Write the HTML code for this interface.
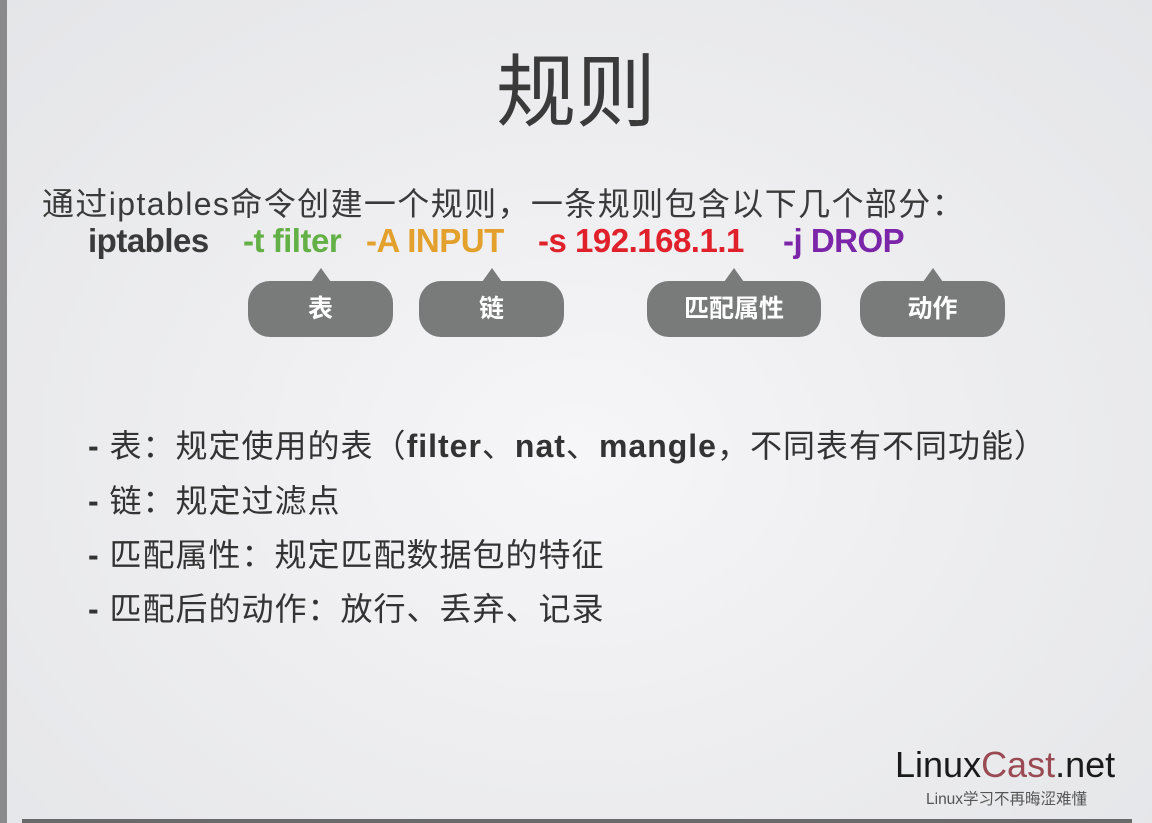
<!DOCTYPE html>
<html><head><meta charset="utf-8"><style>
body{margin:0;width:1152px;height:823px;overflow:hidden;font-family:"Liberation Sans","Noto Sans CJK SC",sans-serif;}
.bg{position:absolute;left:0;top:0;width:1152px;height:823px;background:radial-gradient(ellipse at 50% 55%,#f6f6f8 0%,#eeeef0 45%,#e4e5e8 100%);}
.ls{position:absolute;left:0;top:0;width:7px;height:823px;background:#8a8a8c;}
.bl{position:absolute;left:22px;top:819px;width:1110px;height:4px;background:#6a6a6a;}
.t{position:absolute;white-space:nowrap;}
.b{position:absolute;top:281px;height:56px;background:#797a7a;border-radius:22px;color:#fff;font-size:25px;font-weight:bold;text-align:center;line-height:56px;}
.b:before{content:"";position:absolute;left:50%;top:-13px;margin-left:-10px;border-left:10px solid transparent;border-right:10px solid transparent;border-bottom:14px solid #797a7a;}
.l{font-size:32px;color:#333;left:88px;letter-spacing:1px;}
.c span{position:absolute;top:0;}
</style></head><body>
<div class="bg"></div><div class="ls"></div><div class="bl"></div>
<div class="t" style="left:0;width:1152px;text-align:center;top:28px;font-size:80px;color:#3a3a3a;">规则</div>
<div class="t" style="left:42px;top:179px;font-size:32px;letter-spacing:1.4px;color:#3a3a3a;">通过iptables命令创建一个规则，一条规则包含以下几个部分：</div>
<div class="t c" style="left:0;top:222px;font-size:33px;font-weight:bold;letter-spacing:-0.5px;">
<span style="color:#3a3a3a;left:88px">iptables</span>
<span style="color:#63b046;left:243px">-t filter</span>
<span style="color:#e3a02c;left:366px">-A INPUT</span>
<span style="color:#e0212c;left:538px">-s 192.168.1.1</span>
<span style="color:#7b25a8;left:783px">-j DROP</span></div>
<div class="b" style="left:248px;width:145px;">表</div>
<div class="b" style="left:419px;width:145px;">链</div>
<div class="b" style="left:647px;width:174px;">匹配属性</div>
<div class="b" style="left:860px;width:145px;">动作</div>
<div class="t l" style="top:421px;"><b>-</b> 表：规定使用的表（<b>filter</b>、<b>nat</b>、<b>mangle</b>，不同表有不同功能）</div>
<div class="t l" style="top:476px;"><b>-</b> 链：规定过滤点</div>
<div class="t l" style="top:530px;"><b>-</b> 匹配属性：规定匹配数据包的特征</div>
<div class="t l" style="top:584px;"><b>-</b> 匹配后的动作：放行、丢弃、记录</div>
<div class="t" style="left:895px;top:744px;font-size:36px;color:#1a1a1a;">Linux<span style="color:#9a4a52">Cast</span>.net</div>
<div class="t" style="left:926px;top:787px;font-size:15.5px;color:#555;">Linux学习不再晦涩难懂</div>
</body></html>
